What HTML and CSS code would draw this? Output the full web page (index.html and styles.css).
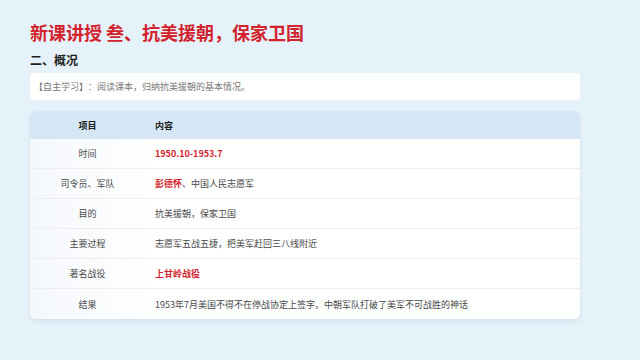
FILE: index.html
```html
<!DOCTYPE html>
<html lang="zh">
<head>
<meta charset="utf-8">
<link rel="stylesheet" href="styles.css">
</head>
<body>
<div class="page">
  <h1 class="title">新课讲授 叁、抗美援朝，保家卫国</h1>
  <h2 class="sub">二、概况</h2>
  <div class="info">【自主学习】：阅读课本，归纳抗美援朝的基本情况。</div>
  <div class="card">
    <div class="row head"><div class="c1">项目</div><div class="c2">内容</div></div>
    <div class="row"><div class="c1">时间</div><div class="c2"><span class="red b">1950.10-1953.7</span></div></div>
    <div class="row"><div class="c1">司令员、军队</div><div class="c2"><span class="red b">彭德怀</span>、中国人民志愿军</div></div>
    <div class="row"><div class="c1">目的</div><div class="c2">抗美援朝，保家卫国</div></div>
    <div class="row"><div class="c1">主要过程</div><div class="c2">志愿军五战五捷，把美军赶回三八线附近</div></div>
    <div class="row"><div class="c1">著名战役</div><div class="c2"><span class="red b">上甘岭战役</span></div></div>
    <div class="row last"><div class="c1">结果</div><div class="c2">1953年7月美国不得不在停战协定上签字。中朝军队打破了美军不可战胜的神话</div></div>
  </div>
</div>
</body>
</html>
```
FILE: styles.css
```css
html, body { margin: 0; padding: 0; }
body {
  width: 640px; height: 360px; overflow: hidden;
  background: #e6f2fa;
  font-family: "Noto Sans CJK SC", "Noto Sans", sans-serif;
  text-spacing-trim: space-all;
}
.page { padding: 20px 60px 0 30px; }
.title {
  margin: 0; font-size: 18px; line-height: 24px; font-weight: 700;
  color: #d2232c;
}
.sub {
  margin: 7px 0 0; font-size: 12px; line-height: 18px; font-weight: 700;
  color: #1e1e1e;
}
.info {
  margin-top: 4px; background: #fff; border-radius: 4px;
  height: 27px; display: flex; align-items: center;
  padding-left: 4px; font-size: 9px; color: #777;
}
.card {
  margin-top: 11px; background: #fff; border-radius: 6px; overflow: hidden;
  box-shadow: 0 2px 5px rgba(120,150,180,0.18);
}
.row {
  display: flex; height: 30px; align-items: center;
  border-bottom: 1px solid #eceef0; box-sizing: border-box;
  font-size: 9px; color: #484848;
}
.row.last { border-bottom: none; }
.row.head { height: 28px; background: #d5e7f5; font-weight: 700; color: #1e1e1e; border-bottom: none; }
.c1 {
  width: 115px; height: 100%; display: flex; align-items: center; justify-content: center;
  background: linear-gradient(to right, #f5f8fb, #fdfeff);
}
.head .c1 { background: none; }
.c2 { padding-left: 10px; }
.red { color: #d2232c; }
.b { font-weight: 700; }
```
